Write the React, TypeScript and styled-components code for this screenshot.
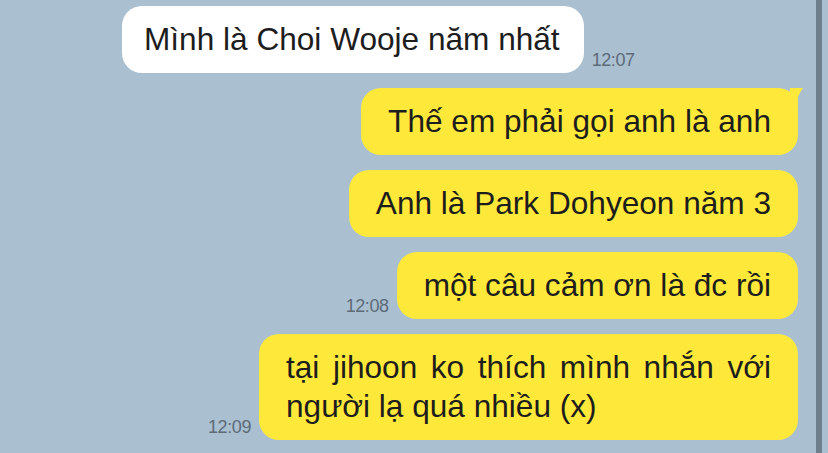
import React from "react";
import styled, { createGlobalStyle } from "styled-components";

const Global = createGlobalStyle`
  html, body { margin: 0; padding: 0; background: #aac0d1; }
  body { font-family: "Liberation Sans", Arial, sans-serif; }
`;

const Screen = styled.div`
  width: 828px;
  height: 453px;
  overflow: hidden;
  display: flex;
  background: #aac0d1;
`;

const Chat = styled.div`
  flex: 1;
  display: flex;
  flex-direction: column;
  gap: 15px;
  padding: 6px 18px 0 122px;
`;

const Scrollbar = styled.div`
  width: 6px;
  margin-right: 6px;
  background: #6f7e8c;
`;

const Row = styled.div<{ $mine?: boolean }>`
  display: flex;
  align-items: flex-end;
  justify-content: ${(p) => (p.$mine ? "flex-end" : "flex-start")};
  gap: 8px;
`;

const Bubble = styled.div<{ $mine?: boolean; $width?: number }>`
  position: relative;
  box-sizing: border-box;
  background: ${(p) => (p.$mine ? "#fee93a" : "#ffffff")};
  color: #1d1d1d;
  border-radius: 20px;
  padding: ${(p) => (p.$mine ? "14px 27px 14px 27px" : "14px 24px 14px 22px")};
  font-size: 31.6px;
  line-height: 39px;
  white-space: ${(p) => (p.$width ? "normal" : "nowrap")};
  text-align: justify;
  width: ${(p) => (p.$width ? `${p.$width}px` : "auto")};
`;

const Tail = styled.svg`
  position: absolute;
  top: 0;
  right: -6px;
  width: 14px;
  height: 18px;
`;

const Time = styled.span`
  font-size: 18px;
  letter-spacing: -0.4px;
  color: #5d6b79;
  line-height: 18px;
  margin-bottom: 4px;
`;

export default function App() {
  return (
    <>
      <Global />
      <Screen>
        <Chat>
          <Row>
            <Bubble>Mình là Choi Wooje năm nhất</Bubble>
            <Time>12:07</Time>
          </Row>
          <Row $mine>
            <Bubble $mine>
              Thế em phải gọi anh là anh
              <Tail viewBox="0 0 14 18">
                <path d="M0 0 L6 0 C9 0 11 0 13.5 -0.5 C11 2 10 5 8 9 L8 18 L0 18 Z" fill="#fee93a" />
              </Tail>
            </Bubble>
          </Row>
          <Row $mine>
            <Bubble $mine>Anh là Park Dohyeon năm 3</Bubble>
          </Row>
          <Row $mine>
            <Time>12:08</Time>
            <Bubble $mine>một câu cảm ơn là đc rồi</Bubble>
          </Row>
          <Row $mine>
            <Time>12:09</Time>
            <Bubble $mine $width={539}>
              tại jihoon ko thích mình nhắn với người lạ quá nhiều (x)
            </Bubble>
          </Row>
        </Chat>
        <Scrollbar />
      </Screen>
    </>
  );
}
